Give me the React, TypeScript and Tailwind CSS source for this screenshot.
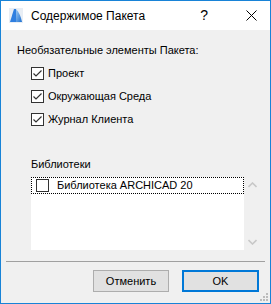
const options = ['Проект', 'Окружающая Среда', 'Журнал Клиента'];

function CheckBox({ checked }: { checked: boolean }) {
  return (
    <span className="flex h-[13px] w-[13px] shrink-0 items-center justify-center border border-[#333] bg-white">
      {checked && (
        <svg width="11" height="11" viewBox="0 0 11 11">
          <path d="M1.5 5.5 L4 8 L9.5 2.5" fill="none" stroke="#333" strokeWidth="1.2" />
        </svg>
      )}
    </span>
  );
}

function AppIcon() {
  return (
    <svg width="14" height="15" viewBox="0 0 14 15">
      <defs>
        <linearGradient id="ai" x1="0" y1="0" x2="1" y2="1">
          <stop offset="0" stopColor="#9cc8f2" />
          <stop offset="1" stopColor="#1c6fd0" />
        </linearGradient>
      </defs>
      <rect x="0" y="0" width="14" height="15" fill="#e8eef5" />
      <path d="M1 14 L5 1 L7 1 L7 14 Z" fill="#2f7fe0" />
      <path d="M7 1 C10 4 12 9 13 14 L7 14 Z" fill="url(#ai)" />
    </svg>
  );
}

export default function App() {
  return (
    <div
      className="flex h-[304px] w-[271px] flex-col border border-[#1883d7] bg-[#f0f0f0] text-[11px] text-[#000]"
      style={{ fontFamily: '"Liberation Sans", Arial, sans-serif' }}
    >
      <div className="flex h-[29px] shrink-0 items-center bg-white pl-[8px] text-[12px]">
        <AppIcon />
        <span className="ml-[8px]">Содержимое Пакета</span>
        <span className="ml-auto mr-[38px] text-[14px]">?</span>
        <svg className="mr-[13px]" width="11" height="11" viewBox="0 0 11 11">
          <path d="M0.5 0.5 L10.5 10.5 M10.5 0.5 L0.5 10.5" stroke="#000" strokeWidth="1" />
        </svg>
      </div>

      <div className="relative flex flex-1 flex-col">
        <p className="ml-[16px] mt-[12px] leading-[16px]">Необязательные элементы Пакета:</p>
        <div className="ml-[30px] mt-[9px] flex flex-col gap-[10px]">
          {options.map((o) => (
            <label key={o} className="flex h-[13px] items-center gap-[4px] leading-[13px]">
              <CheckBox checked />
              <span>{o}</span>
            </label>
          ))}
        </div>

        <p className="ml-[30px] mt-[31px] leading-[14px]">Библиотеки</p>
        <div className="ml-[30px] mt-[6px] flex">
          <div className="h-[73px] w-[213px] bg-white">
            <div className="flex h-[17px] items-center border border-dotted border-[#000] pl-[4px]">
              <CheckBox checked={false} />
              <span className="ml-[8px]">Библиотека ARCHICAD 20</span>
            </div>
          </div>
          <div className="flex w-[17px] flex-col items-center justify-between py-[5px]">
            <svg width="9" height="6" viewBox="0 0 9 6">
              <path d="M0.5 5 L4.5 1 L8.5 5" fill="none" stroke="#c8c8c8" strokeWidth="1.6" />
            </svg>
            <svg width="9" height="6" viewBox="0 0 9 6">
              <path d="M0.5 1 L4.5 5 L8.5 1" fill="none" stroke="#c8c8c8" strokeWidth="1.6" />
            </svg>
          </div>
        </div>

        <div className="mx-[5px] mt-[11px] h-px bg-[#a0a0a0]" />

        <div className="mt-[8px] flex justify-end gap-[13px] pr-[11px]">
          <button className="h-[22px] w-[76px] border border-[#adadad] bg-[#e1e1e1] leading-[20px]">
            Отменить
          </button>
          <button className="h-[22px] w-[77px] border-2 border-[#0078d7] bg-[#e1e1e1] leading-[18px]">
            OK
          </button>
        </div>

        <svg className="absolute bottom-[2px] right-[2px]" width="8" height="8" viewBox="0 0 8 8">
          <rect x="6" y="0" width="2" height="2" fill="#bcbcbc" />
          <rect x="3" y="3" width="2" height="2" fill="#bcbcbc" />
          <rect x="6" y="3" width="2" height="2" fill="#bcbcbc" />
          <rect x="0" y="6" width="2" height="2" fill="#bcbcbc" />
          <rect x="3" y="6" width="2" height="2" fill="#bcbcbc" />
          <rect x="6" y="6" width="2" height="2" fill="#bcbcbc" />
        </svg>
      </div>
    </div>
  );
}
